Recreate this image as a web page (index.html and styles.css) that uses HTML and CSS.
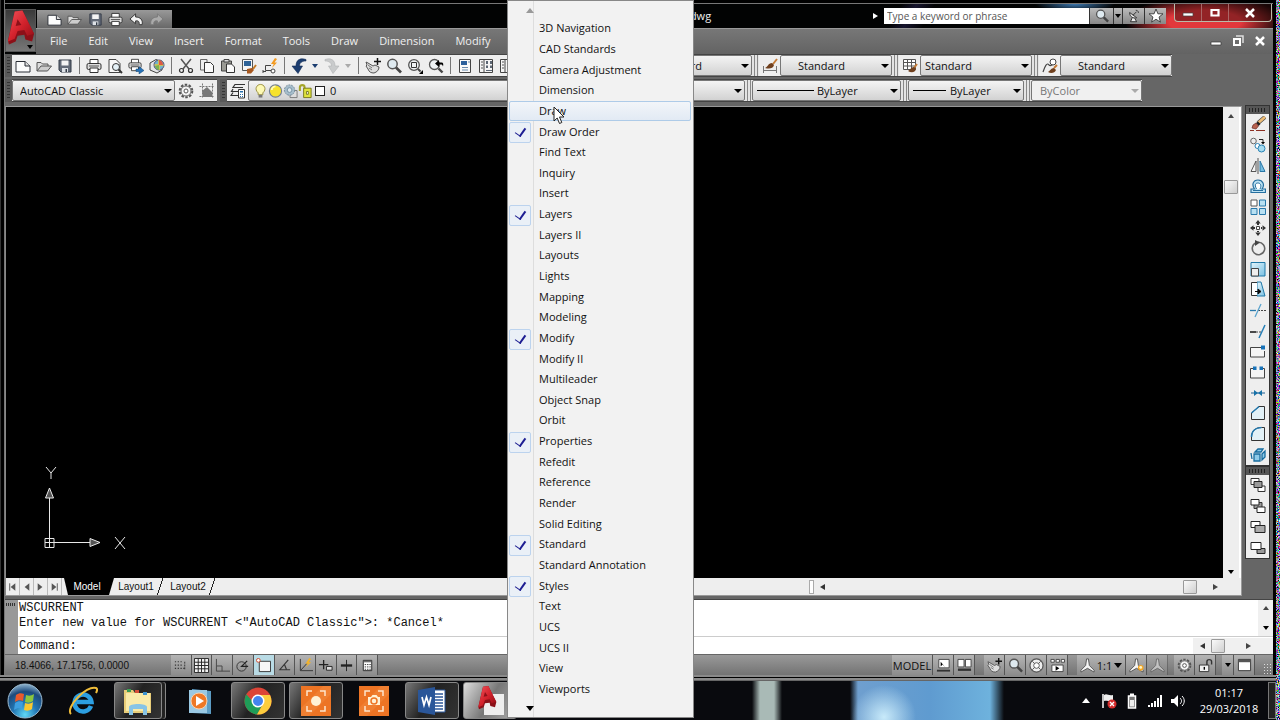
FILE: index.html
```html
<!DOCTYPE html>
<html lang="en">
<head>
<meta charset="utf-8">
<title>AutoCAD Classic</title>
<link rel="stylesheet" href="styles.css">
</head>
<body>
<svg class="defs" aria-hidden="true">
<defs>
<linearGradient id="gRed" x1="0" y1="0" x2="1" y2="1"><stop offset="0" stop-color="#f0525a"/><stop offset=".5" stop-color="#d3222c"/><stop offset="1" stop-color="#8c0c14"/></linearGradient>
<linearGradient id="gBlue" x1="0" y1="0" x2="1" y2="1"><stop offset="0" stop-color="#e4f5fc"/><stop offset="1" stop-color="#79c0e2"/></linearGradient>
<radialGradient id="gOrb" cx=".5" cy=".9" r=".9"><stop offset="0" stop-color="#5fd8f5"/><stop offset=".4" stop-color="#2276b4"/><stop offset=".75" stop-color="#1c4a7c"/><stop offset="1" stop-color="#8fb4cf"/></radialGradient>
<filter id="noise" x="0" y="0" width="1" height="1"><feTurbulence type="fractalNoise" baseFrequency=".9" numOctaves="2" seed="4"/><feColorMatrix values="3 0 0 0 -1.2  0 3 0 0 -1.2  0 0 3 0 -1.1  0 0 0 0 1"/></filter>
</defs>
<symbol id="new" viewBox="0 0 16 16"><path d="M1 3.500h9l5 4.500v6H1z" fill="#fdfdfd" stroke="#2b2f36"/><path d="M10 3.500V8h5" fill="#ddd" stroke="#2b2f36"/></symbol>
<symbol id="open" viewBox="0 0 16 16"><path d="M1 13V4.500h4l1.500 1.500H12v2" fill="#ddd" stroke="#555"/><path d="M1 13l4-5h10.500l-4 5z" fill="#cdcdcd" stroke="#555"/></symbol>
<symbol id="save" viewBox="0 0 16 16"><path d="M2 2h12v12H4l-2-2z" fill="#636b78" stroke="#333b47"/><path d="M4.500 2.500h7v5h-7z" fill="#f4f4f4"/><path d="M5 10h6v4H5z" fill="#dde1e6"/><path d="M8.500 11h1.500v3H8.500z" fill="#333b47"/></symbol>
<symbol id="print" viewBox="0 0 16 16"><path d="M4 6V1.500h8V6" fill="#fff" stroke="#333"/><rect x="1" y="5.500" width="14" height="6" rx="1.500" fill="#dcdcdc" stroke="#333"/><path d="M4 10h8v4.500H4z" fill="#fff" stroke="#333"/><path d="M3 8h10" stroke="#555"/></symbol>
<symbol id="undoS" viewBox="0 0 16 16"><path d="M7 2L1 7.500l6 5V9.500c3-.5 4 .5 4 4h3C15 8 12 5.500 7 5.300z" fill="#f4f4f4" stroke="#333"/></symbol>
<symbol id="redoS" viewBox="0 0 16 16"><path d="M9 2l6 5.500-6 5V9.500c-3-.5-4 .5-4 4H2C1 8 4 5.500 9 5.300z" fill="#aaa" stroke="#7a7a7a"/></symbol>
<symbol id="preview" viewBox="0 0 16 16"><path d="M2 1.500h7l4 4v9H2z" fill="#f8f8f8" stroke="#444"/><circle cx="9" cy="9" r="3.500" fill="#e5f1f7" stroke="#333"/><path d="M11.500 11.500L15 15" stroke="#333" stroke-width="2"/></symbol>
<symbol id="plot" viewBox="0 0 16 16"><use href="#print" width="14" height="14"/><path d="M8 11h3V8.500l5 4-5 3.500v-2.500H8z" fill="#2672b8" stroke="#114472" stroke-width=".5"/></symbol>
<symbol id="publish" viewBox="0 0 16 16"><path d="M1 5l6-3.500L13 4v8l-5 3-7-3z" fill="#e5e7e8" stroke="#444"/><circle cx="10" cy="7" r="5" fill="#73b4cf" stroke="#557"/><path d="M10 2v10M5.500 7h9" stroke="#e2c33b" stroke-width="1.500"/><path d="M10 2a5 5 0 014 5h-4z" fill="#de5941"/><path d="M6 8a5 5 0 004 4V7z" fill="#7bb24e"/></symbol>
<symbol id="cut" viewBox="0 0 16 16"><path d="M3 1l8 10M13 1L5 11" stroke="#555" stroke-width="1.500"/><circle cx="3.500" cy="12.500" r="2" fill="none" stroke="#333" stroke-width="1.200"/><circle cx="12.500" cy="12.500" r="2" fill="none" stroke="#333" stroke-width="1.200"/></symbol>
<symbol id="copy" viewBox="0 0 16 16"><path d="M1.500 1.500H8V12H1.500z" fill="#eee" stroke="#666"/><path d="M5.500 4.500h6l3 3v7h-9z" fill="#fafafa" stroke="#333"/></symbol>
<symbol id="paste" viewBox="0 0 16 16"><path d="M1.500 3h10v10h-10z" fill="#9a9a94" stroke="#444"/><path d="M4 1.500h5V4H4z" fill="#ddd" stroke="#444"/><path d="M6.500 6h5l3 3v5.500h-8z" fill="#fafafa" stroke="#333"/></symbol>
<symbol id="match" viewBox="0 0 16 16"><path d="M1.500 1.500h10v11h-10z" fill="#f5f5f5" stroke="#555"/><path d="M3 3h7v5H3z" fill="#2e6297"/><path d="M15 7l-3 4" stroke="#c57a27" stroke-width="2"/><path d="M6 11l5-1 2 2-3 3.500H6z" fill="#a8581f"/></symbol>
<symbol id="block" viewBox="0 0 16 16"><path d="M9 7.500H3.500v5H10M1 13.500h3M1 12v3" fill="none" stroke="#444"/><circle cx="11" cy="13" r="2" fill="#fff" stroke="#444"/><path d="M13 0L9 6h2.700L10 10l5-5.500h-2.500L15 1z" fill="#f49b21"/></symbol>
<symbol id="undo" viewBox="0 0 16 16"><path d="M15 1.500C9-.5 5 2 5 8H1l6 7.500L11.500 8H8.500c0-3 2-5 6.500-5z" fill="#1b3d70" stroke="#142d55" stroke-width=".6"/></symbol>
<symbol id="redo" viewBox="0 0 16 16"><path d="M1 1.500c6-2 10 .5 10 6.500h4l-6 7.500L4.500 8h3c0-3-2-5-6.500-5z" fill="#c9cbcc" stroke="#b0b2b4" stroke-width=".6"/></symbol>
<symbol id="pan" viewBox="0 0 16 16"><path d="M1 4l2 1 5 3 2-1 4 2c0 3-2 5-5 6-3 0-5-1-6-4L1 8l1-1z" fill="#ddd" stroke="#555"/><path d="M3 7l4 3M4 10l3 2" stroke="#777"/><path d="M12.500 0v7M9 3.500h7" stroke="#111" stroke-width="1.500"/></symbol>
<symbol id="zoom" viewBox="0 0 16 16"><circle cx="6.500" cy="6" r="4.700" fill="#dfeaf0" stroke="#555" stroke-width="1.500"/><path d="M10 9.500l5 5" stroke="#444" stroke-width="2.700"/></symbol>
<symbol id="zoomW" viewBox="0 0 16 16"><circle cx="7" cy="7" r="5.300" fill="#eef2f4" stroke="#555" stroke-width="1.300"/><path d="M4.500 4.500h5v5h-5z" fill="none" stroke="#333"/><path d="M11 11l2.500 2.500" stroke="#444" stroke-width="2"/><path d="M16 12v4h-4z"/></symbol>
<symbol id="zoomP" viewBox="0 0 16 16"><circle cx="6.500" cy="6.500" r="5" fill="#eef2f4" stroke="#555" stroke-width="1.300"/><path d="M10.500 10.500l4 4" stroke="#444" stroke-width="2.400"/><path d="M7 5.500L11 2v2.500h2.500c2 0 2 2 1.500 4-.5-1.500-1-2-2-2h-2V9z"/></symbol>
<symbol id="props" viewBox="0 0 16 16"><path d="M2.500 1.500h11v13h-11z" fill="#fafafa" stroke="#444"/><path d="M4 3h6v4H4z" fill="#2c609c"/><path d="M11 4h2M5 9.500h6M5 12h6" stroke="#6b8cae"/></symbol>
<symbol id="design" viewBox="0 0 16 16"><path d="M1.500 1.500h13v13h-13zM6 2v13" fill="#f5f5f5" stroke="#444"/><path d="M3 4h2M3 7h2M3 10h2" stroke="#555"/><path d="M8 3h2v3H8zM12 3h2v3h-2zM8 7.500h2v2.500H8zM12 7.500h2v2.500h-2zM8 12h6v1H8z" fill="#5c6673"/></symbol>
<symbol id="gear" viewBox="0 0 16 16"><circle cx="8" cy="8" r="6.300" fill="none" stroke="#555" stroke-width="2" stroke-dasharray="2.500 1.450"/><circle cx="8" cy="8" r="5" fill="#f4f4f4" stroke="#666"/><circle cx="8" cy="8" r="2" fill="#fff" stroke="#555"/></symbol>
<symbol id="wshome" viewBox="0 0 16 16"><path d="M.5 3.500h15M.5 13.500h15M3.500.5v15M13.500.5v15" stroke="#777" stroke-dasharray="2 1"/><path d="M3 8l5-4 5 5v5H4z" fill="#777"/></symbol>
<symbol id="layer" viewBox="0 0 16 16"><path d="M15 1.500H5L3 4.500h10M3 6l-1.500 2.500H8M3 9.500L1 12.500h7" fill="none" stroke="#333" stroke-width="1.200"/><path d="M8.500 6.500h6v8.500h-6z" fill="#fff" stroke="#333"/><path d="M10 8h3v1.500h-3zM10 11h1v1h-1zM12 11h1v1h-1zM10 13h1v1h-1zM12 13h1v1h-1z" fill="#2770ad"/></symbol>
<symbol id="bulb" viewBox="0 0 16 16"><path d="M5.500 10C1 6 4 1 8 1s7 5 2.500 9v2h-5z" fill="#fdf9b4" stroke="#988d3b"/><path d="M6 12h4v3H6z" fill="#777"/></symbol>
<symbol id="sun" viewBox="0 0 16 16"><circle cx="8" cy="8" r="6.500" fill="#f6e22d" stroke="#737f91" stroke-width="1.200"/><path d="M4 7a4 4 0 014-4" stroke="#fffbb5" stroke-width="2" fill="none"/></symbol>
<symbol id="freeze" viewBox="0 0 16 16"><path d="M7.500 7.500H15V15H7.500z" fill="#ddd" stroke="#777"/><circle cx="7" cy="7" r="5.500" fill="#a6bdcb" stroke="#6f8797" stroke-dasharray="2 1"/><circle cx="7" cy="7" r="2.500" fill="#dce8ee" stroke="#7490a2"/></symbol>
<symbol id="lockY" viewBox="0 0 16 16"><path d="M2 8V4c0-3 5-3 5 0v2" fill="none" stroke="#a5a52a" stroke-width="2.200"/><path d="M6 5h8v10H6z" fill="#dfe33d" stroke="#77761c"/><path d="M9 8.500h2v3H9z" fill="#fff" stroke="#77761c"/></symbol>
<symbol id="dimstyle" viewBox="0 0 16 16"><path d="M1.500 8v7M14.500 8v7M2 12.500h12" stroke="#777"/><path d="M15 1l-4 5" stroke="#c47a35" stroke-width="2"/><path d="M3 10c3-1 3-5 7-5l2 2c-1 4-5 4-9 3z" fill="#70401e"/></symbol>
<symbol id="tabstyle" viewBox="0 0 16 16"><path d="M1.500 1.500h12v10h-12zM2 4.500h11M2 8h11M5.500 2v9M9.500 2v9" fill="#fff" stroke="#555"/><path d="M15 6l-3 4" stroke="#c47a35" stroke-width="2"/><path d="M6 13c2-1 3-4 6-4l2 2c-1 4-5 4-8 2z" fill="#70401e"/></symbol>
<symbol id="mlstyle" viewBox="0 0 16 16"><path d="M1 14C3 8 5 4 7 7c1 1 3 1 4-2" fill="none" stroke="#444" stroke-width="1.200"/><circle cx="11" cy="4" r="3" fill="#fff" stroke="#444"/><path d="M15 7l-3 3" stroke="#c47a35" stroke-width="2"/><path d="M6 14c2-1 3-4 6-4l2 2c-1 3-5 4-8 2z" fill="#70401e"/></symbol>
<symbol id="erase" viewBox="0 0 16 16"><path d="M15 1L8 7" stroke="#444" stroke-width="4"/><path d="M15 1L8 7" stroke="#edbc75" stroke-width="2.800"/><path d="M8 5.500l2.500 2.500-2 2L6 7z" fill="#222"/><path d="M6 7l2.500 3L6 13l-4-1 1-3z" fill="#b9634f" stroke="#6d2b24" stroke-width=".7"/><path d="M0 14.500h4M6 14.500h9" stroke="#8c2f22"/></symbol>
<symbol id="copyo" viewBox="0 0 16 16"><circle cx="3.500" cy="4" r="2.800" fill="#eee" stroke="#666"/><circle cx="7.500" cy="9" r="2.500" fill="#fff" stroke="#2a83b5"/><circle cx="11.500" cy="11.500" r="3.500" fill="#a6dbf0" stroke="#2a83b5"/><path d="M9 2.500h4v3" fill="none" stroke="#222"/><path d="M11 5h4l-2 2.500z"/></symbol>
<symbol id="mirror" viewBox="0 0 16 16"><path d="M6 3v10.500H1zM8 0v16" fill="#f5f5f5" stroke="#555"/><path d="M10 3v10.500h5z" fill="#75bce0" stroke="#2a76a5"/></symbol>
<symbol id="offset" viewBox="0 0 16 16"><path d="M1 14.500h14.500v-3.500H12c3-4 1-9-4-9S1.500 7 4.500 11H1z" fill="#bde2f3" stroke="#256fa0" stroke-width="1.200"/><path d="M3 12.500h10M6.500 11C4 6 6 5 8 5s4 2 2 6" fill="#fff" stroke="#256fa0"/></symbol>
<symbol id="array" viewBox="0 0 16 16"><path d="M1 1h6v6H1z" fill="#fff" stroke="#555"/><path d="M9.500 1h6v6h-6zM1 9.500h6v6H1zM9.500 9.500h6v6h-6z" fill="#b8e0f2" stroke="#2878aa"/></symbol>
<symbol id="move" viewBox="0 0 16 16"><path d="M8 0l2.700 3.500H5.300zM8 16l2.700-3.500H5.300zM0 8l3.500-2.700v5.400zM16 8l-3.500-2.700v5.400zM7 3h2v2H7zM7 11h2v2H7zM3 7h2v2H3zM11 7h2v2h-2z" fill="#333"/><path d="M6.500 6.500h3v3h-3z" fill="#fff" stroke="#444"/></symbol>
<symbol id="rotate" viewBox="0 0 16 16"><path d="M6 2.800A6.200 6.200 0 108 2.300" fill="none" stroke="#666" stroke-width="1.600"/><path d="M5 0l5 2.500L5 6z" fill="#444"/></symbol>
<symbol id="scale" viewBox="0 0 16 16"><path d="M1 1.500h14V15H1z" fill="url(#gBlue)" stroke="#2179a8"/><path d="M1.500 7.500h7V15h-7z" fill="#eee" stroke="#444"/></symbol>
<symbol id="stretch" viewBox="0 0 16 16"><path d="M7 1h4l4 14H7z" fill="url(#gBlue)" stroke="#2179a8"/><path d="M7 1.500H1.500v13H7" fill="#fff" stroke="#333"/><path d="M5 10.500h4M8 8l3 2.500L8 13z" stroke="#111"/></symbol>
<symbol id="trim" viewBox="0 0 16 16"><path d="M0 8.500h6" stroke="#2878aa" stroke-width="1.300"/><path d="M8 8.500h8" stroke="#444" stroke-dasharray="2 1"/><path d="M11 2L5 15" stroke="#5aa3cd" stroke-width="1.300"/></symbol>
<symbol id="extend" viewBox="0 0 16 16"><path d="M0 9h6" stroke="#111" stroke-width="1.500"/><path d="M6 9h5" stroke="#444" stroke-dasharray="2 1"/><path d="M15 2L9 15" stroke="#257eb6" stroke-width="1.500"/></symbol>
<symbol id="breakp" viewBox="0 0 16 16"><path d="M11 4.500H.5V14H14.500V8" fill="#f5f5f5" stroke="#444"/><path d="M11 2.500h4v4h-4z" fill="#1772b8"/></symbol>
<symbol id="break" viewBox="0 0 16 16"><path d="M3 4.500H.5V14h14V4.500H13" fill="#f5f5f5" stroke="#444"/><path d="M3 2.500h3.500v3.500H3zM9.500 2.500H13v3.500H9.500z" fill="#1772b8"/></symbol>
<symbol id="join" viewBox="0 0 16 16"><path d="M1 8h14" stroke="#1b5f94"/><path d="M4 5l4 3-4 3zM12 5l-4 3 4 3z" fill="#1772a8"/></symbol>
<symbol id="chamfer" viewBox="0 0 16 16"><path d="M1.500 8L9 1.500h5.500v13h-13z" fill="#e2f1f7" stroke="#333"/><path d="M1.500 8L9 1.500" stroke="#2179b0" stroke-width="1.400"/></symbol>
<symbol id="fillet" viewBox="0 0 16 16"><path d="M1.500 14.500V11c0-6 4-9.500 10-9.500h3v13z" fill="#e2f1f7" stroke="#333"/><path d="M1.500 11c0-6 4-9.500 10-9.500" fill="none" stroke="#2179b0" stroke-width="1.500"/></symbol>
<symbol id="explode" viewBox="0 0 16 16"><path d="M4 7h6v7H4zM5 5l3-3h5l-2 3zM12 7l3-3v6l-3 3zM1 6l1 6" fill="#8ecae8" stroke="#176c9e" stroke-width="1.300"/></symbol>
<symbol id="ord1" viewBox="0 0 16 16"><path d="M1 1.500h8v6H1zM8 9h7v5.500H8z" fill="#fff" stroke="#333"/><path d="M4 4.500h8v6H4z" fill="#999" stroke="#222"/></symbol>
<symbol id="ord2" viewBox="0 0 16 16"><path d="M4 4.500h8v6H4z" fill="#999" stroke="#333"/><path d="M1 1.500h8v5.500H1zM7 9h8v5.500H7z" fill="#fff" stroke="#222"/></symbol>
<symbol id="ord3" viewBox="0 0 16 16"><path d="M1 2.500h9v6H1z" fill="#fff" stroke="#222"/><path d="M5 6.500h10v7H5z" fill="#aaa" stroke="#222"/></symbol>
<symbol id="ord4" viewBox="0 0 16 16"><path d="M7 8.500h8v5H7z" fill="#999" stroke="#222"/><path d="M1 2.500h10v7H1z" fill="#fff" stroke="#222"/></symbol>
<symbol id="dish" viewBox="0 0 16 16"><path d="M3 4c0 5 4 7 8 6zM6 10l-2 4.500h7L9 11M7 7l4-4M10 1.500c2 0 3 1 3 3" fill="#eee" stroke="#222"/></symbol>
<symbol id="star" viewBox="0 0 16 16"><path d="M8 0l2.200 5.500H16l-4.500 3.700L13 15l-5-3.300L3 15l1.500-5.800L0 5.500h5.800z" fill="#fff" stroke="#333"/></symbol>
<symbol id="snap" viewBox="0 0 16 16"><path d="M2 4h8M2 7.500h8M2 11h11" stroke="#333" stroke-width="1.300" stroke-dasharray="1.300 1.700"/><path d="M12.500 4v8" stroke="#333" stroke-dasharray="2 1"/></symbol>
<symbol id="grid" viewBox="0 0 16 16"><path d="M.5.5h15v15H.5zM4.500 1v14M8 1v14M11.500 1v14M1 4.500h14M1 8h14M1 11.500h14" fill="#f3f3f3" stroke="#222"/></symbol>
<symbol id="ortho" viewBox="0 0 16 16"><path d="M1.500 1v13H16M2 8.500h5.500V14" fill="none" stroke="#444"/></symbol>
<symbol id="polar" viewBox="0 0 16 16"><circle cx="7" cy="9" r="5" fill="none" stroke="#333"/><path d="M14 9H7l6-6" fill="none" stroke="#222" stroke-width="1.300"/></symbol>
<symbol id="osnap" viewBox="0 0 16 16"><path d="M3.500 3.500h12v11h-12z" fill="#f6f6f6" stroke="#333"/><circle cx="2.500" cy="2.500" r="2" fill="#fff" stroke="#cf4a2c"/></symbol>
<symbol id="otrack" viewBox="0 0 16 16"><path d="M12 2L3 12.500h11M8 7l2 5" fill="none" stroke="#333" stroke-width="1.200"/></symbol>
<symbol id="ducs" viewBox="0 0 16 16"><path d="M2.500 1v12.500H16M3 13L12 3" fill="none" stroke="#333"/><path d="M12 0L8 6h2.500L8 10l6-5.500h-2.500L14 1z" fill="#f2b32c"/></symbol>
<symbol id="dyn" viewBox="0 0 16 16"><path d="M6 2v10M1 7h10" stroke="#222" stroke-width="1.400"/><path d="M9 9h6v4H9z" fill="#ddd" stroke="#222"/></symbol>
<symbol id="lwt" viewBox="0 0 16 16"><path d="M8 2v12" stroke="#222"/><path d="M2 8h12" stroke="#222" stroke-width="2.500"/></symbol>
<symbol id="qp" viewBox="0 0 16 16"><path d="M3.500 2.500h9v11h-9z" fill="#fff" stroke="#222"/><path d="M4 4h8" stroke="#333"/><path d="M5 7h7M5 9.500h7M5 12h7" stroke="#333" stroke-dasharray="1.500 1"/></symbol>
<symbol id="lay1" viewBox="0 0 16 16"><path d="M3 1.500h11v9H3z" fill="#fff" stroke="#444"/><path d="M5 4v5l2-2 3 3z"/><path d="M1 13.500h14" stroke="#333" stroke-width="2"/></symbol>
<symbol id="lay2" viewBox="0 0 16 16"><path d="M1 1.500h6.500v8H1zM9 1.500h6v8H9z" fill="#fff" stroke="#444"/><path d="M1 12.500h14" stroke="#333" stroke-width="2.500"/></symbol>
<symbol id="wheel" viewBox="0 0 16 16"><circle cx="8" cy="8" r="7" fill="#eee" stroke="#555" stroke-width="1.300"/><circle cx="8" cy="8" r="3" fill="#fff" stroke="#555"/><path d="M3.500 3.500L6 6M12.500 3.500L10 6M3.500 12.500L6 10M12.500 12.500L10 10" stroke="#555"/></symbol>
<symbol id="motion" viewBox="0 0 16 16"><path d="M1 1.500h3.500v3H1zM6.500 1.500H10v3H6.500zM12 1.500h3.500v3H12zM2 7.500h12v7H2z" fill="#fff" stroke="#444"/><path d="M6 8.500l4 2.500-4 2.500z"/></symbol>
<symbol id="anno" viewBox="0 0 16 16"><path d="M7 1h2l1 7 5 5v2l-7-4-7 4v-2l5-5z" fill="#f6f6f6" stroke="#555"/></symbol>
<symbol id="annoS" viewBox="0 0 16 16"><use href="#anno"/><circle cx="12.500" cy="10.500" r="3" fill="#f5a623"/><circle cx="12.500" cy="10" r="1.500" fill="#fff6c6"/></symbol>
<symbol id="lockW" viewBox="0 0 16 16"><path d="M9.500 8V4c0-3 5-3 5 0v3" fill="none" stroke="#333" stroke-width="1.500"/><path d="M1.500 7.500h10v7h-10z" fill="#f3f3f3" stroke="#333"/><path d="M6 9.500h1.500v3H6z"/></symbol>
<symbol id="clean" viewBox="0 0 16 16"><path d="M1.500 1.500h13v12h-13z" fill="#fff" stroke="#333"/><path d="M1.500 2h13v2.500h-13z" fill="#555"/></symbol>
<symbol id="bigA" viewBox="0 0 30 36"><path d="M9 1l8-1 12 24-2 8-7-2-1-5-7 1-2 6-7 3-1-4z" fill="#8c1018"/><path d="M9 1l8-1 12 24-7 2-3-6-7 1-3 8-7 3zm3 8l-2 7 6-1z" fill="url(#gRed)"/></symbol>
<symbol id="camO" viewBox="0 0 30 30"><path d="M0 0h30v30H0z" fill="#ed7424"/><path d="M0 22L22 0h8v8L8 30H0z" fill="#f2873a" opacity=".6"/><path d="M6 10V5h5M19 5h5v5M24 20v5h-5M11 25H6v-5" fill="none" stroke="#fde5cc" stroke-width="1.500"/></symbol>
</svg>

<div class="screen">
<main class="window">
  <header class="top">
    <button class="appbtn" aria-label="Application menu"><svg><use href="#bigA"/></svg></button>
    <div class="bars">
      <div class="titlebar">
        <div class="quick">
          <button aria-label="New"><svg class="i"><use href="#new"/></svg></button>
          <button aria-label="Open"><svg class="i"><use href="#open"/></svg></button>
          <button aria-label="Save"><svg class="i"><use href="#save"/></svg></button>
          <button aria-label="Print"><svg class="i"><use href="#print"/></svg></button>
          <button aria-label="Undo"><svg class="i"><use href="#undoS"/></svg></button>
          <button aria-label="Redo"><svg class="i"><use href="#redoS"/></svg></button>
        </div>
        <span class="doc">.dwg</span>
        <div class="search">
          <span class="tri right"></span>
          <input type="text" aria-label="Search help" placeholder="Type a keyword or phrase">
          <button aria-label="Search" class="wide"><svg class="i"><use href="#zoom"/></svg></button>
          <button aria-label="Search options" class="thin"><span class="tri down small"></span></button>
          <button aria-label="Communication center"><svg class="i"><use href="#dish"/></svg></button>
          <button aria-label="Favorites"><svg class="i"><use href="#star"/></svg></button>
        </div>
        <div class="wincontrols">
          <button aria-label="Minimize"><svg viewBox="0 0 12 10"><path d="M1 5h10v3H1z" fill="#fff" stroke="#444" stroke-width=".7"/></svg></button>
          <button aria-label="Maximize"><svg viewBox="0 0 12 10"><path d="M2.500 2h7v5.500h-7z" fill="none" stroke="#fff" stroke-width="2.200"/></svg></button>
          <button aria-label="Close" class="closebtn"><svg viewBox="0 0 12 10"><path d="M2 1l8 8M10 1L2 9" stroke="#fff" stroke-width="2.500"/></svg></button>
        </div>
      </div>
      <nav class="menubar">
        <button>File</button><button>Edit</button><button>View</button><button>Insert</button><button>Format</button><button>Tools</button><button>Draw</button><button>Dimension</button><button>Modify</button>
        <div class="doccontrols">
          <button aria-label="Minimize drawing"><svg viewBox="0 0 12 12"><path d="M1 7h10v3H1z" fill="#fff" stroke="#333" stroke-width=".7"/></svg></button>
          <button aria-label="Restore drawing"><svg viewBox="0 0 12 12"><path d="M4 1h7v7" fill="none" stroke="#ddd" stroke-width="1.500"/><path d="M2 4h6v6H2z" fill="none" stroke="#fff" stroke-width="2"/></svg></button>
          <button aria-label="Close drawing"><svg viewBox="0 0 12 12"><path d="M2 2l8 8M10 2l-8 8" stroke="#fff" stroke-width="2.500"/></svg></button>
        </div>
      </nav>
    </div>
  </header>

  <div class="toolrow">
    <span class="grip"></span>
    <div class="tools">
      <button aria-label="QNew"><svg class="i"><use href="#new"/></svg></button><button aria-label="Open file"><svg class="i"><use href="#open"/></svg></button><button aria-label="Save file"><svg class="i"><use href="#save"/></svg></button><span class="sep"></span>
      <button aria-label="Plot"><svg class="i"><use href="#print"/></svg></button><button aria-label="Plot preview"><svg class="i"><use href="#preview"/></svg></button><button aria-label="Publish"><svg class="i"><use href="#plot"/></svg></button><button aria-label="3DDWF"><svg class="i"><use href="#publish"/></svg></button><span class="sep"></span>
      <button aria-label="Cut"><svg class="i"><use href="#cut"/></svg></button><button aria-label="Copy"><svg class="i"><use href="#copy"/></svg></button><button aria-label="Paste"><svg class="i"><use href="#paste"/></svg></button><button aria-label="Match properties"><svg class="i"><use href="#match"/></svg></button><button aria-label="Block editor"><svg class="i"><use href="#block"/></svg></button><span class="sep"></span>
      <button aria-label="Undo action"><svg class="i"><use href="#undo"/></svg></button><button class="thin" aria-label="Undo list"><span class="tri down small navy"></span></button><button aria-label="Redo action"><svg class="i"><use href="#redo"/></svg></button><button class="thin" aria-label="Redo list"><span class="tri down small pale"></span></button><span class="sep"></span>
      <button aria-label="Pan"><svg class="i"><use href="#pan"/></svg></button><button aria-label="Zoom realtime"><svg class="i"><use href="#zoom"/></svg></button><button aria-label="Zoom window"><svg class="i"><use href="#zoomW"/></svg></button><button aria-label="Zoom previous"><svg class="i"><use href="#zoomP"/></svg></button><span class="sep"></span>
      <button aria-label="Properties"><svg class="i"><use href="#props"/></svg></button><button aria-label="DesignCenter"><svg class="i"><use href="#design"/></svg></button><button aria-label="Tool palettes"><svg class="i"><use href="#design"/></svg></button>
    </div>
    <div class="tools styles">
      <span class="combo textstyle"><select aria-label="Text style"><option>Standard</option></select></span><span class="bars2"></span>
      <button aria-label="Dimension style"><svg class="i"><use href="#dimstyle"/></svg></button><span class="combo style indent"><select aria-label="Current dimension style"><option>Standard</option></select></span><span class="bars2"></span>
      <button aria-label="Table style"><svg class="i"><use href="#tabstyle"/></svg></button><span class="combo style"><select aria-label="Current table style"><option>Standard</option></select></span><span class="bars2"></span>
      <button aria-label="Multileader style"><svg class="i"><use href="#mlstyle"/></svg></button><span class="combo style indent"><select aria-label="Current multileader style"><option>Standard</option></select></span>
    </div>
  </div>

  <div class="toolrow">
    <span class="grip"></span>
    <div class="tools">
      <span class="combo workspace"><select aria-label="Workspace"><option>AutoCAD Classic</option></select></span>
      <button aria-label="Workspace settings"><svg class="i"><use href="#gear"/></svg></button><button aria-label="My workspace"><svg class="i"><use href="#wshome"/></svg></button>
    </div>
    <span class="grip second"></span>
    <div class="tools">
      <button aria-label="Layer properties"><svg class="i"><use href="#layer"/></svg></button>
      <span class="combo layers"><select aria-label="Layer"><option>0</option></select>
        <span class="layericons"><svg class="i"><use href="#bulb"/></svg><svg class="i"><use href="#sun"/></svg><svg class="i"><use href="#freeze"/></svg><svg class="i"><use href="#lockY"/></svg><span class="swatch"></span></span></span>
    </div>
    <div class="tools properties">
      <span class="combo color"><select aria-label="Color"><option></option></select></span><span class="bars2"></span><span class="combo linetype"><select aria-label="Linetype"><option>ByLayer</option></select></span><span class="bars2"></span><span class="combo weight"><select aria-label="Lineweight"><option>ByLayer</option></select></span><span class="bars2"></span><span class="combo plotstyle"><select aria-label="Plot style" disabled><option>ByColor</option></select></span>
    </div>
  </div>

  <div class="work">
    <section class="drawing">
      <div class="view">
        <div class="canvas">
          <svg class="ucs" viewBox="0 0 90 90" fill="none" stroke="#e8e8e8"><path d="M9.500 72V22M14 76.500h46M5 72.500h9v9H5zM9.500 72v9M5 76.500h9"/><path d="M9.500 22l-4 10h8zM60 76.500l-10-4v8z" fill="#555"/><path d="M6 1l5 6 5-6M11 7v6M75 71l10 12M85 71L75 83"/></svg>
        </div>
        <div class="vscroll"><button aria-label="Scroll up"><span class="tri up"></span></button><span class="thumb"></span><button aria-label="Scroll down"><span class="tri down"></span></button></div>
      </div>
      <div class="tabs">
        <div class="tabnav">
          <button aria-label="First tab"><svg viewBox="0 0 14 14"><path d="M4 3v8" stroke="#555"/><path d="M10 3v8L5 7z" fill="#555"/></svg></button><button aria-label="Previous tab"><svg viewBox="0 0 14 14"><path d="M10 3v8L5 7z" fill="#555"/></svg></button><button aria-label="Next tab"><svg viewBox="0 0 14 14"><path d="M4 3v8l5-4z" fill="#555"/></svg></button><button aria-label="Last tab"><svg viewBox="0 0 14 14"><path d="M10 3v8" stroke="#555"/><path d="M4 3v8l5-4z" fill="#555"/></svg></button>
        </div>
        <button class="tab active">Model</button><button class="tab">Layout1</button><button class="tab">Layout2</button>
        <div class="hscroll"><span class="split"></span><button aria-label="Scroll left"><span class="tri left"></span></button><span class="thumb"></span><button aria-label="Scroll right"><span class="tri right"></span></button></div>
      </div>
    </section>
    <aside class="side">
      <div class="palette">
        <span class="pgrip"></span>
        <div class="pbody modify">
          <button aria-label="Erase"><svg class="i"><use href="#erase"/></svg></button><button aria-label="Copy object"><svg class="i"><use href="#copyo"/></svg></button><button aria-label="Mirror"><svg class="i"><use href="#mirror"/></svg></button><button aria-label="Offset"><svg class="i"><use href="#offset"/></svg></button><button aria-label="Array"><svg class="i"><use href="#array"/></svg></button><button aria-label="Move"><svg class="i"><use href="#move"/></svg></button><button aria-label="Rotate"><svg class="i"><use href="#rotate"/></svg></button><button aria-label="Scale"><svg class="i"><use href="#scale"/></svg></button><button aria-label="Stretch"><svg class="i"><use href="#stretch"/></svg></button><button aria-label="Trim"><svg class="i"><use href="#trim"/></svg></button><button aria-label="Extend"><svg class="i"><use href="#extend"/></svg></button><button aria-label="Break at point"><svg class="i"><use href="#breakp"/></svg></button><button aria-label="Break"><svg class="i"><use href="#break"/></svg></button><button aria-label="Join"><svg class="i"><use href="#join"/></svg></button><button aria-label="Chamfer"><svg class="i"><use href="#chamfer"/></svg></button><button aria-label="Fillet"><svg class="i"><use href="#fillet"/></svg></button><button aria-label="Explode"><svg class="i"><use href="#explode"/></svg></button>
        </div>
      </div>
      <div class="palette">
        <span class="pgrip"></span>
        <div class="pbody order">
          <button aria-label="Bring to front"><svg class="i"><use href="#ord1"/></svg></button><button aria-label="Send to back"><svg class="i"><use href="#ord2"/></svg></button><button aria-label="Bring above"><svg class="i"><use href="#ord3"/></svg></button><button aria-label="Send under"><svg class="i"><use href="#ord4"/></svg></button>
        </div>
      </div>
    </aside>
  </div>

  <section class="command">
    <span class="cgrip"></span>
    <div class="ctext">
      <div class="history">
        <div class="lines"><p>WSCURRENT</p><p>Enter new value for WSCURRENT &lt;"AutoCAD Classic"&gt;: *Cancel*</p></div>
        <div class="cscroll"><span class="tri up"></span><span class="tri down"></span></div>
      </div>
      <div class="prompt"><label for="cmd">Command:</label><input id="cmd" type="text"><div class="cscrollh"><span class="tri left"></span><span class="thumb"></span><span class="tri right"></span></div></div>
    </div>
  </section>

  <footer class="status">
    <span class="coords">18.4066, 17.1756, 0.0000</span>
    <div class="sgroup toggles">
      <button aria-label="Snap"><svg class="i"><use href="#snap"/></svg></button><button aria-label="Grid"><svg class="i"><use href="#grid"/></svg></button><button aria-label="Ortho"><svg class="i"><use href="#ortho"/></svg></button><button aria-label="Polar"><svg class="i"><use href="#polar"/></svg></button><button class="on" aria-label="Object snap"><svg class="i"><use href="#osnap"/></svg></button><button aria-label="Object snap tracking"><svg class="i"><use href="#otrack"/></svg></button><button aria-label="Dynamic UCS"><svg class="i"><use href="#ducs"/></svg></button><button aria-label="Dynamic input"><svg class="i"><use href="#dyn"/></svg></button><button aria-label="Lineweight display"><svg class="i"><use href="#lwt"/></svg></button><button aria-label="Quick properties"><svg class="i"><use href="#qp"/></svg></button>
    </div>
    <div class="sright">
      <div class="sgroup"><button class="label">MODEL</button><button aria-label="Quick view layouts"><svg class="i"><use href="#lay1"/></svg></button><button aria-label="Quick view drawings"><svg class="i"><use href="#lay2"/></svg></button></div>
      <div class="sgroup views"><button aria-label="Pan view"><svg class="i"><use href="#pan"/></svg></button><button aria-label="Zoom view"><svg class="i"><use href="#zoom"/></svg></button><button aria-label="Steering wheel"><svg class="i"><use href="#wheel"/></svg></button><button aria-label="ShowMotion"><svg class="i"><use href="#motion"/></svg></button></div>
      <div class="sgroup"><button class="scalebtn"><svg class="i"><use href="#anno"/></svg>1:1<span class="tri down"></span></button><button aria-label="Annotation visibility"><svg class="i"><use href="#annoS"/></svg></button><button class="dim" aria-label="Auto add scales"><svg class="i"><use href="#anno"/></svg></button></div>
      <div class="sgroup"><button aria-label="Workspace switching"><svg class="i"><use href="#gear"/></svg></button><button aria-label="Lock toolbars"><svg class="i"><use href="#lockW"/></svg></button></div>
      <div class="sgroup"><button class="thin" aria-label="Status menu"><span class="tri down small"></span></button><button aria-label="Clean screen"><svg class="i"><use href="#clean"/></svg></button></div>
      <span class="resize"></span>
    </div>
  </footer>
</main>

<footer class="taskbar">
  <button class="orb" aria-label="Start"><svg viewBox="0 0 36 36"><circle cx="18" cy="18" r="17" fill="url(#gOrb)" stroke="#9cbcd2"/><path d="M9 12c3-2 5-2 8-1l-1 7c-3-1-5-1-8 1z" fill="#e8592c"/><path d="M19 12c3 1 5 1 8-1l-1 7c-3 2-5 2-8 1z" fill="#8cc63e"/><path d="M8 20c3-2 5-2 8-1l-1 7c-3-1-5-1-8 1z" fill="#3f9fe0"/><path d="M18 20c3 1 5 1 8-1l-1 7c-3 2-5 2-8 1z" fill="#fbc82e"/></svg></button>
  <button class="task bare" aria-label="Internet Explorer"><svg viewBox="0 0 30 30"><path d="M23 20a8.500 8.500 0 11.500-4H9" fill="none" stroke="#2c9fe2" stroke-width="4.500"/><path d="M3 28C-3 22 18-1 28 2c2 1 1 3 0 5" fill="none" stroke="#eebc3a" stroke-width="2"/></svg></button>
  <button class="task stacked" aria-label="Explorer"><svg viewBox="0 0 30 30"><path d="M1 4h9l2 3h16v20H1z" fill="#e8cd79"/><path d="M3 7h24v18H3z" fill="#f9eaa9"/><path d="M4 3h4v3H4z" fill="#3a9d54"/><path d="M12 4h4v3h-4z" fill="#d54e38"/><path d="M20 6h4v3h-4z" fill="#3c92cf"/><path d="M6 29v-8c0-4 18-4 18 0v8h-4v-6H10v6z" fill="#87c4e6"/></svg></button>
  <button class="task bare" aria-label="Media Player"><svg viewBox="0 0 30 30"><path d="M7 3l19 2v23l-19-1z" fill="#5c9cc4"/><path d="M4 4h18v23H4z" fill="#9ac9e4"/><circle cx="14" cy="15" r="8" fill="#ee7826" stroke="#fbd3ae"/><path d="M11 10l8 5-8 5z" fill="#fff"/></svg></button>
  <button class="task" aria-label="Chrome"><svg viewBox="0 0 30 30"><circle cx="15" cy="15" r="13.500" fill="#dc4437"/><path d="M3.300 8.300A13.500 13.500 0 0014 28.500L20 18l-9-1z" fill="#1f9d58"/><path d="M14 28.500A13.500 13.500 0 0027 9H15l5 9z" fill="#fccd3e"/><circle cx="15" cy="15" r="6.500" fill="#fff"/><circle cx="15" cy="15" r="5" fill="#4484f0"/></svg></button>
  <button class="task" aria-label="Screen recorder"><svg viewBox="0 0 30 30"><use href="#camO"/><circle cx="15" cy="15" r="5" fill="#fff1d5"/></svg></button>
  <button class="task bare" aria-label="Screen capture"><svg viewBox="0 0 30 30"><use href="#camO"/><path d="M9 11h3l1.500-2h4l1.500 2h2v8H9z" fill="#fff1d5"/><circle cx="15" cy="15" r="3" fill="#fff1d5" stroke="#ed7424" stroke-width="1.500"/></svg></button>
  <button class="task" aria-label="Word"><svg viewBox="0 0 30 30"><path d="M15 4h13v22H15z" fill="#fff" stroke="#2a5699"/><path d="M18 8h8M18 11h8M18 14h8M18 17h8M18 20h8M18 23h8" stroke="#2a5699" stroke-width="1.300"/><path d="M1 4l17-3v28L1 26z" fill="#2a5699"/><path d="M5 11l2 8 2.500-8 2.500 8 2-8" fill="none" stroke="#fff" stroke-width="1.700"/></svg></button>
  <button class="task current" aria-label="AutoCAD"><svg viewBox="0 0 30 30"><path d="M9 8h20v21H9z" fill="#eee"/><use href="#bigA" x="2" y="0" width="20" height="24"/></svg></button>
  <div class="tray">
    <span class="tri up white"></span>
    <svg class="i" viewBox="0 0 16 16"><path d="M2 1v14" stroke="#fff" stroke-width="1.500"/><path d="M3 2c3-2 4 1 9 0v6c-4 1-6-1-9 0z" fill="#eee"/><circle cx="11" cy="11" r="4.500" fill="#d62c2c"/><path d="M9 9l4 4M13 9l-4 4" stroke="#fff" stroke-width="1.300"/></svg>
    <svg class="i" viewBox="0 0 16 16"><path d="M4.500 3h7v12h-7z" fill="#777" stroke="#fff" stroke-width="1.500"/><path d="M6 .500h4V3H6z" fill="#fff"/><path d="M6 7h4v6.500H6z" fill="#eee"/></svg>
    <svg class="i" viewBox="0 0 16 16"><path d="M1 12h2v2H1zM4 10h2v4H4zM7 8h2v6H7zM10 5h2v9h-2zM13 2h2v12h-2z" fill="#fff"/></svg>
    <svg class="i" viewBox="0 0 16 16"><path d="M1 6h3l4-4v12l-4-4H1z" fill="#fff"/><path d="M10 5c2 2 2 4 0 6M12 3c3 3 3 7 0 10" fill="none" stroke="#fff"/></svg>
    <div class="clock"><span>01:17</span><span>29/03/2018</span></div>
    <span class="showdesk"></span>
  </div>
</footer>
<svg class="edge" aria-hidden="true"><rect width="100%" height="100%" filter="url(#noise)"/></svg>

<div class="popup" role="menu">
  <span class="more"><span class="tri up gray"></span></span>
  <ul>
    <li><button role="menuitem">3D Navigation</button></li>
    <li><button role="menuitem">CAD Standards</button></li>
    <li><button role="menuitem">Camera Adjustment</button></li>
    <li><button role="menuitem">Dimension</button></li>
    <li class="hover"><button role="menuitem">Draw</button></li>
    <li class="checked"><button role="menuitem">Draw Order</button></li>
    <li><button role="menuitem">Find Text</button></li>
    <li><button role="menuitem">Inquiry</button></li>
    <li><button role="menuitem">Insert</button></li>
    <li class="checked"><button role="menuitem">Layers</button></li>
    <li><button role="menuitem">Layers II</button></li>
    <li><button role="menuitem">Layouts</button></li>
    <li><button role="menuitem">Lights</button></li>
    <li><button role="menuitem">Mapping</button></li>
    <li><button role="menuitem">Modeling</button></li>
    <li class="checked"><button role="menuitem">Modify</button></li>
    <li><button role="menuitem">Modify II</button></li>
    <li><button role="menuitem">Multileader</button></li>
    <li><button role="menuitem">Object Snap</button></li>
    <li><button role="menuitem">Orbit</button></li>
    <li class="checked"><button role="menuitem">Properties</button></li>
    <li><button role="menuitem">Refedit</button></li>
    <li><button role="menuitem">Reference</button></li>
    <li><button role="menuitem">Render</button></li>
    <li><button role="menuitem">Solid Editing</button></li>
    <li class="checked"><button role="menuitem">Standard</button></li>
    <li><button role="menuitem">Standard Annotation</button></li>
    <li class="checked"><button role="menuitem">Styles</button></li>
    <li><button role="menuitem">Text</button></li>
    <li><button role="menuitem">UCS</button></li>
    <li><button role="menuitem">UCS II</button></li>
    <li><button role="menuitem">View</button></li>
    <li><button role="menuitem">Viewports</button></li>
  </ul>
  <span class="more last"><span class="tri down"></span></span>
</div>
<svg class="cursor" viewBox="0 0 12 19" aria-hidden="true"><path d="M1 1v14l3.200-3 2.300 5.500 2.300-1L6.500 11H11z" fill="#fff" stroke="#222"/></svg>
</div>
</body>
</html>
```

FILE: styles.css
```css
* { box-sizing: border-box; }
body { margin: 0; background: #000; font-family: "Open Sans", "Noto Sans", sans-serif; font-size: 11px; color: #111; }
button, input, select { font: inherit; color: inherit; margin: 0; padding: 0; border: 0; background: none; border-radius: 0; }
button { display: flex; align-items: center; justify-content: center; flex: none; }
ul, p { margin: 0; padding: 0; list-style: none; }
.defs { position: absolute; width: 0; height: 0; }
.i { width: 16px; height: 16px; flex: none; display: block; }

.tri { display: block; width: 0; height: 0; border: 4px solid transparent; flex: none; }
.tri.down { border-top: 5px solid #000; border-bottom: 0; }
.tri.up { border-bottom: 5px solid #444; border-top: 0; }
.tri.left { border-right: 5px solid #333; border-left: 0; }
.tri.right { border-left: 5px solid #444; border-right: 0; }
.vscroll .tri, .cscroll .tri { border-left-width: 3px; border-right-width: 3px; }
.vscroll .up, .cscroll .up { border-bottom-width: 4px; }
.vscroll .down, .cscroll .down { border-top-width: 4px; }
.hscroll .tri, .cscrollh .tri, .search .tri.right { border-top-width: 3px; border-bottom-width: 3px; }
.tri.small { border-width: 3px; border-top-width: 4px; border-bottom-width: 0; }
.tri.navy { border-top-color: #1b3d70; }
.tri.pale { border-top-color: #aaa; }
.tri.white { border-bottom-color: #fff; }
.tri.gray { border-bottom-color: #999; }
.thumb { display: block; width: 14px; height: 14px; border: 1px solid #999; border-radius: 1px; background: linear-gradient(135deg, #fafafa, #cfcfcf); flex: none; }

.screen { position: relative; height: 100vh; display: grid; grid-template: 1fr 40px / minmax(0, 1fr) 4px; overflow: hidden; }
.edge { grid-column: 2; grid-row: 1 / 3; width: 4px; height: 100%; }
.window { grid-column: 1; grid-row: 1; min-height: 0; display: flex; flex-direction: column; padding: 3px 3px 0 5px; border-bottom: 5px double #8a8a8a; background: #000; box-shadow: inset 1px 0 #333, inset 4px 0 #000, inset 5px 0 #777; }

.top { display: flex; height: 51px; border-top: 1px solid #777; flex: none; background:
  radial-gradient(ellipse 80px 26px at 1200px 18px, #e2383c 45%, transparent 100%),
  radial-gradient(ellipse 40px 8px at 1070px 0, #3c78b0, transparent),
  linear-gradient(120deg, transparent 776px, #17152e 790px, transparent 806px), #020303; }
.appbtn { width: 31px; margin-top: 5px; height: 43px; border: 1px solid #555; background: linear-gradient(#3a3a3a, #777); position: relative; align-items: flex-start; }
.appbtn svg { width: 30px; height: 36px; }
.appbtn::after { content: ""; position: absolute; right: 2px; bottom: 2px; border: 3px solid transparent; border-top: 4px solid #000; border-bottom: 0; }
.bars { flex: 1; min-width: 0; }
.titlebar { height: 24px; display: flex; }
.quick { display: flex; margin: 6px 0 0 1px; width: 135px; padding: 0 5px 0 7px; background: linear-gradient(#999, #686868); justify-content: space-between; }
.quick button { width: 20px; }
.quick .i { width: 15px; height: 15px; }
.doc { margin-left: 515px; padding-top: 4px; color: #eee; }
.search { display: flex; align-items: center; margin: 3px 8px 0 auto; height: 18px; }
.search .tri.right { border-left-color: #fff; margin-right: 6px; }
.search input { width: 205px; height: 16px; background: #fff; padding: 0 3px; font-size: 10px; }
.search input::placeholder { color: #555; opacity: 1; }
.search button { width: 22px; height: 16px; background: linear-gradient(#bbb, #888); border-left: 1px solid #333; }
.search button.wide { width: 24px; }
.search button.thin { width: 9px; }
.search .i { width: 14px; height: 14px; }
.wincontrols { display: flex; height: 18px; margin-right: 1px; border: 1px solid #bba; border-top: 0; border-radius: 0 0 4px 4px; background: rgba(50,10,10,.45); }
.wincontrols button { width: 27px; border-right: 1px solid #a66; }
.wincontrols .closebtn { width: 42px; border: 0; }
.wincontrols svg { width: 12px; height: 10px; }
.menubar { display: flex; align-items: center; gap: 21px; height: 26px; padding: 0 0 2px 14px; color: #f0f0f0; background: linear-gradient(#777, #636363); border-top: 1px solid #999; }
.doccontrols { margin-left: auto; display: flex; gap: 10px; padding-right: 7px; }
.doccontrols svg { width: 12px; height: 12px; }

.toolrow { display: flex; flex: none; height: 25px; background: #666; padding-bottom: 2px; }
.grip { width: 7px; background: repeating-linear-gradient(#333 0 1px, transparent 1px 3px) 2px 3px / 3px 17px no-repeat, #595959; }
.grip.second { margin-left: 3px; width: 7px; }
.tools { display: flex; background: #eee; border: 1px solid #444; border-width: 1px 0; flex: none; }
.tools button { width: 21px; }
.tools button.thin { width: 12px; }
.sep { width: 8px; background: linear-gradient(#777, #777) center / 1px 17px no-repeat; }
.bars2 { width: 7px; background: linear-gradient(#888, #888) 2px 0 / 1px 100% no-repeat, linear-gradient(#888, #888) 5px 0 / 1px 100% no-repeat, #e4e4e4; }
.styles { margin-left: 85px; }
.properties { margin-left: 22px; }
.combo { position: relative; display: flex; flex: none; }
.combo select { appearance: none; width: 100%; padding-left: 8px; border: 1px solid #777; background: linear-gradient(#f4f4f4, #d2d2d2); border-radius: 2px; }
.combo::after { content: ""; position: absolute; right: 3px; top: 9px; border: 4px solid transparent; border-top: 4px solid #000; border-bottom: 0; pointer-events: none; }
.textstyle { width: 150px; }
.textstyle select { padding-left: 52px; }
.style { width: 112px; }
.style select { padding-left: 4px; }
.style.indent select { padding-left: 17px; }
.workspace { width: 163px; }
.workspace select { padding-left: 7px; }
.layers { width: 350px; }
.layers select { padding-left: 81px; }
.layericons { position: absolute; left: 5px; top: 3px; display: flex; align-items: center; pointer-events: none; }
.layericons .i { width: 15px; }
.swatch { width: 10px; height: 10px; background: #fff; border: 1px solid #222; margin-left: 2px; }
.color { width: 125px; }
.linetype { width: 149px; }
.linetype select { padding-left: 64px; background: linear-gradient(#000, #000) 4px center / 57px 1px no-repeat, linear-gradient(#f4f4f4, #d2d2d2); }
.weight { width: 116px; }
.weight select { padding-left: 41px; background: linear-gradient(#000, #000) 4px center / 33px 1px no-repeat, linear-gradient(#f4f4f4, #d2d2d2); }
.plotstyle { width: 111px; }
.plotstyle select { background: #f0f0f0; color: #777; opacity: 1; }
.plotstyle::after { border-top-color: #aaa; }

.work { flex: 1; min-height: 0; display: flex; background: #666; padding: 2px 3px 3px 0; gap: 3px; }
.drawing { flex: 1; min-width: 0; display: flex; flex-direction: column; border: 1px solid #999; border-left-color: #888; }
.view { flex: 1; min-height: 0; display: flex; background: #eee; }
.canvas { flex: 1; background: #000; display: flex; align-items: flex-end; padding: 0 0 22px 34px; }
.ucs { width: 90px; height: 90px; }
.vscroll { width: 18px; display: flex; flex-direction: column; align-items: center; padding: 7px 0 4px; border-right: 2px solid #fff; }
.vscroll .thumb { margin: 62px 0 auto; }
.tabs { height: 17px; flex: none; display: flex; background: #eee; }
.tabnav { display: flex; margin-right: 2px; }
.tabnav button { width: 14px; border-right: 1px solid #bbb; }
.tabnav svg { width: 13px; height: 14px; }
.tab { width: 52px; padding-right: 8px; font-family: "Liberation Sans", sans-serif; font-size: 10px; background: linear-gradient(108deg, transparent 46px, #222 46px 47px, transparent 47px); }
.tab.active { width: 50px; padding-right: 4px; color: #fff; background: #000; clip-path: polygon(0 0, 100% 0, 45px 100%, 4px 100%); }
.hscroll { margin-left: auto; width: 432px; display: flex; align-items: center; padding-right: 23px; }
.split { width: 5px; height: 14px; border: 1px solid #aaa; background: #fff; margin-right: 6px; }
.hscroll .thumb { margin: 0 16px 0 auto; }

.side { width: 25px; flex: none; display: flex; flex-direction: column; }
.palette { border: 1px solid #333; }
.palette:first-child { margin-top: -1px; }
.pgrip { display: block; height: 8px; background: repeating-linear-gradient(90deg, #222 0 1px, transparent 1px 3px) 3px 2px / 16px 4px no-repeat, #555; }
.pbody { display: flex; flex-direction: column; background: #eee; }
.pbody button { flex: 1; width: 100%; }
.modify { height: 351px; }
.order { height: 83px; }

.command { display: flex; height: 55px; flex: none; background: #fff; border-top: 1px solid #444; font: 12px/15px "Liberation Mono", monospace; }
.cgrip { width: 13px; background: repeating-linear-gradient(90deg, #333 0 1px, transparent 1px 2px) 1px 3px / 10px 3px no-repeat, #999; }
.ctext { flex: 1; display: flex; flex-direction: column; min-width: 0; }
.history { height: 38px; border-bottom: 1px solid #ccc; display: flex; justify-content: space-between; padding-left: 1px; }
.lines { padding-top: 1px; }
.cscroll { width: 15px; background: #f0f0f0; display: flex; flex-direction: column; align-items: center; justify-content: space-between; padding: 6px 0; }
.prompt { flex: 1; display: flex; align-items: center; padding-left: 1px; }
.prompt label { padding-top: 2px; }
.prompt input { flex: 1; min-width: 0; outline: 0; }
.cscrollh { width: 80px; height: 16px; background: #f0f0f0; display: flex; align-items: center; padding: 0 22px 0 7px; justify-content: space-between; }
.cscrollh .thumb { margin-right: 16px; }

.status { display: flex; height: 21px; flex: none; background: linear-gradient(#999, #737373); border-top: 1px solid #666; }
.coords { width: 166px; padding: 4px 0 0 10px; font: 10px/13px "Liberation Sans", sans-serif; }
.sgroup { display: flex; }
.sgroup button { width: 21px; border-right: 1px solid #555; background: linear-gradient(#b5b5b5, #8c8c8c); }
.sgroup .i { width: 15px; height: 15px; }
.sgroup .on { background: #b9dbe5; }
.sgroup .dim { opacity: .55; }
.sgroup .label { width: 41px; }
.sgroup .thin { width: 12px; }
.sgroup .scalebtn { width: 49px; gap: 2px; }
.toggles { width: 207px; }
.toggles button { flex: 1; }
.sright { margin-left: auto; display: flex; gap: 6px; }
.views { margin: 0 3px; }
.resize { width: 8px; margin: 8px 2px 0 2px; background: radial-gradient(#ddd 1px, transparent 1px) 0 0 / 3px 3px; }

.taskbar { grid-column: 1; grid-row: 2; display: flex; align-items: stretch; padding: 1px 0 1px 7px; border-top: 1px solid #666; background:
  linear-gradient(90deg, transparent 752px, #a9bab6 760px 774px, transparent 782px),
  radial-gradient(circle at 884px 36px, #c8eafa, transparent 32px),
  linear-gradient(90deg, transparent 850px, #6f9fcf 858px, #5f9bd0 930px, #6eb2dd 990px, transparent 1004px), #090a0e; }
.orb { width: 36px; }
.orb svg { width: 36px; height: 36px; }
.task { width: 54px; margin-right: 4px; border: 1px solid #888; border-radius: 3px; background: linear-gradient(120deg, #777, #222 45%, #333); }
.task svg { width: 30px; height: 30px; }
.task.bare { border-color: transparent; background: none; }
.orb + .task { width: 50px; margin-left: 15px; margin-right: 6px; }
.task.stacked { width: 48px; box-shadow: 3px 0 #222, 4px 0 #888; margin-right: 11px; }
.task.current { background: linear-gradient(120deg, #ddd, #777 50%, #aaa); }
.tray { margin-left: auto; display: flex; align-items: center; gap: 7px; color: #fff; }
.tray .white { margin-right: 4px; }
.clock { width: 70px; margin-left: 1px; display: flex; flex-direction: column; align-items: center; line-height: 16px; }
.showdesk { width: 8px; height: 100%; border: 1px solid #777; background: #222; margin-left: -3px; }

.popup { position: absolute; left: 507px; top: 0; bottom: 2px; width: 187px; display: flex; flex-direction: column; background: linear-gradient(90deg, transparent 25px, #ddd 25px 26px, transparent 26px), #f2f2f2; border: 1px solid #888; padding: 0 2px 0 1px; }
.more { height: 17px; flex: none; padding: 7px 0 0 17px; }
.more.last { height: 18px; }
.popup ul { flex: 1; min-height: 0; display: flex; flex-direction: column; }
.popup li { flex: 1; min-height: 0; display: flex; position: relative; border: 1px solid transparent; border-radius: 2px; }
.popup li button { flex: 1; justify-content: flex-start; padding: 0 0 1px 29px; }
.popup li.hover { border-color: #aecbe8; background: linear-gradient(#f2f5f9, #e2eaf4); }
.popup li.checked::before { content: ""; position: absolute; left: -1px; top: 0; width: 20px; height: 19px; border: 1px solid #bcd3ee; border-radius: 2px; background: #eaf0f7; }
.popup li.checked::after { content: ""; position: absolute; left: 7px; top: 4px; width: 5px; height: 9px; border: solid #1d1d92; border-width: 0 2px 1px 0; transform: rotate(35deg); }
.cursor { position: absolute; left: 553px; top: 106px; width: 12px; height: 19px; }
```
